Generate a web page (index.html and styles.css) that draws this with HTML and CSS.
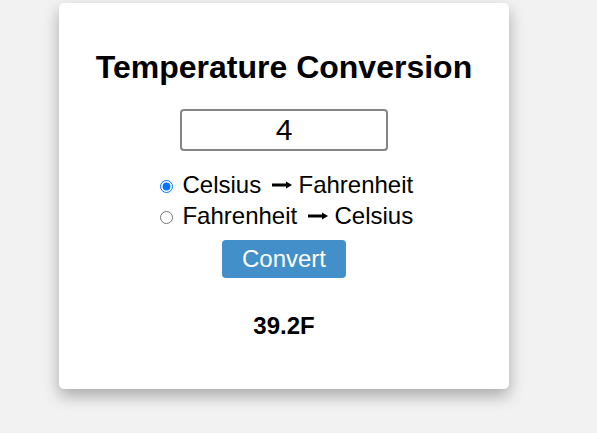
FILE: index.html
```html
<!DOCTYPE html>
<html lang="en">
<head>
<meta charset="utf-8">
<title>Temperature Conversion</title>
<link rel="stylesheet" href="styles.css">
</head>
<body>
<div class="card">
  <h1 class="title">Temperature Conversion</h1>
  <input class="temp-input" type="text" value="4">
  <div class="options">
    <label class="option"><input type="radio" name="mode" checked> Celsius <svg class="arrow" viewBox="0 0 24 10" width="24" height="10"><rect x="4" y="3.5" width="15" height="3" fill="#000"/><polygon points="18,1.5 24,5 18,8.5" fill="#000"/></svg> Fahrenheit</label>
    <label class="option"><input type="radio" name="mode"> Fahrenheit <svg class="arrow" viewBox="0 0 24 10" width="24" height="10"><rect x="4" y="3.5" width="15" height="3" fill="#000"/><polygon points="18,1.5 24,5 18,8.5" fill="#000"/></svg> Celsius</label>
  </div>
  <button class="convert-btn" type="button">Convert</button>
  <div class="result">39.2F</div>
</div>
</body>
</html>
```

FILE: styles.css
```css
html, body {
  margin: 0;
  padding: 0;
}
body {
  background: #f2f2f2;
  font-family: "Liberation Sans", Arial, sans-serif;
  color: #000;
  height: 433px;
  overflow: hidden;
}
.card {
  box-sizing: border-box;
  margin: 3px 0 0 59px;
  width: 450px;
  height: 386px;
  background: #fff;
  border-radius: 5px;
  box-shadow: 0 7px 16px rgba(0, 0, 0, 0.3);
  padding-top: 46px;
  display: flex;
  flex-direction: column;
  align-items: center;
}
.title {
  margin: 0;
  font-size: 32px;
  font-weight: bold;
}
.temp-input {
  box-sizing: border-box;
  margin-top: 23px;
  width: 208px;
  height: 42px;
  border: 2px solid #858585;
  border-radius: 4px;
  font-family: "Liberation Sans", Arial, sans-serif;
  font-size: 30px;
  text-align: center;
  color: #000;
  padding: 0;
  outline: none;
}
.options {
  margin-top: 18px;
  display: flex;
  flex-direction: column;
  align-items: center;
}
.option {
  display: block;
  font-size: 24px;
  line-height: 31px;
  white-space: nowrap;
}
.option input {
  margin: 3px 3px 0 5px;
}
.arrow {
  vertical-align: 3.5px;
}
.convert-btn {
  margin-top: 9px;
  width: 124px;
  height: 38px;
  border: none;
  border-radius: 4px;
  background: #428fc9;
  color: #fff;
  font-family: "Liberation Sans", Arial, sans-serif;
  font-size: 24px;
  padding: 0;
}
.result {
  margin-top: 34px;
  font-size: 24px;
  font-weight: bold;
}
```
